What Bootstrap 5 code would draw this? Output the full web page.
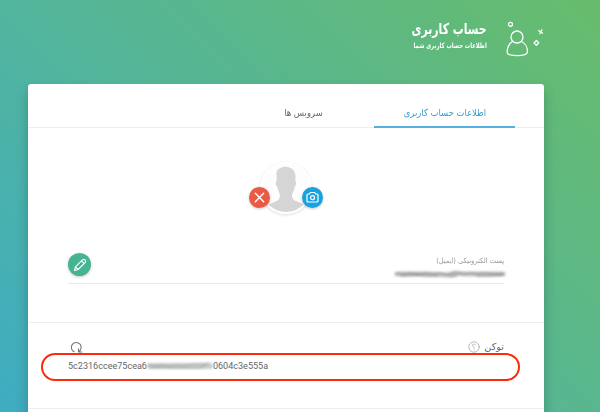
<!DOCTYPE html>
<html lang="fa" dir="rtl">
<head>
<meta charset="utf-8">
<meta name="viewport" content="width=device-width, initial-scale=1">
<title>حساب کاربری</title>
<link rel="stylesheet" href="https://cdn.jsdelivr.net/npm/bootstrap@5.3.0/dist/css/bootstrap.min.css">
<style>
body{height:412px;overflow:hidden;font-family:"DejaVu Sans",sans-serif;line-height:1;background:linear-gradient(45deg,#3eacc2 0%,#52b59e 40%,#5ab78c 62%,#67bc6b 100%)}
svg{display:block;fill:none;stroke:currentColor;stroke-linecap:round;stroke-linejoin:round}
.page-head{height:84px;padding:21px 57px 0 0}
.head-text{margin-right:18px}
.head-title{font-size:15px;line-height:18px;margin:-1px 0 0;transform:scaleX(.725);transform-origin:right}
.head-sub{font-size:7.4px;line-height:10px;margin:3px 0 0;font-weight:700;transform:scaleX(.72);transform-origin:right}
.panel{width:516px;height:328px;margin-right:56px;border:0;border-radius:3px 3px 0 0;box-shadow:0 7px 12px rgba(0,50,50,.28)}
.panel-tabs{height:44px;padding:17px 29px 0 0;border-bottom:1px solid #eee}
.panel-tabs .nav-link{width:141px;height:27px;padding:6px 0 0;border:0;border-bottom:2px solid transparent;border-radius:0;color:#666;font-size:9.8px;line-height:12px;text-align:center;white-space:nowrap;background:none;transition:none}
.panel-tabs .nav-link span{display:inline-block;transform:scaleX(.86)}
.panel-tabs .nav-link.active{color:#349fd5;border-color:#55b0df}
.profile{height:195px;padding:34px 40px 0;border-bottom:1px solid #eee}
.portrait{width:74px;height:53px;margin:0 auto}
.portrait-img{width:52px;height:52px;border:2px solid #fff;box-shadow:0 1px 3px rgba(0,0,0,.14);background:#fdfdfd;overflow:hidden}
.round-btn{width:21px;height:21px;color:#fff;box-shadow:0 1px 3px rgba(0,0,0,.22);border:0;padding:0}
.remove{background:#e95b45;left:0;top:25px}
.camera{background:#18a2df;right:0;top:25px}
.edit{width:23px;height:23px;background:#46b493;margin-bottom:7px}
.field{height:35px;margin-top:34px;border-bottom:1px solid #e8e8e8}
.field-label{font-size:7.4px;line-height:10px;color:#999;transform:scaleX(.9);transform-origin:right;margin-top:3px}
.smudge{filter:blur(.8px)}
.mail-smudge{margin:3px -2px 0 0}
.token{height:86px;padding:17px 40px 0;border-bottom:1px solid #eee}
.token-name{font-size:9.7px;line-height:14px;color:#666}
.muted-stroke{stroke:#aaa}
.reload{stroke:#777}
.token-value{font:9.05px/12px Roboto,sans-serif;color:#666;margin-top:6px}
.highlight{width:479px;height:28px;left:13px;top:269px;border:2px solid #fb2b0b;border-radius:15px}
</style>
<script src="https://cdn.jsdelivr.net/npm/bootstrap@5.3.0/dist/js/bootstrap.bundle.min.js"></script>
</head>
<body>
<header class="page-head d-flex align-items-start text-white">
  <svg width="38" height="36" viewBox="505 21 38 36" stroke-width="1.3"><circle cx="517" cy="37" r="6"/><path d="M512.5 41.5C508.8 43.5 507 48.5 507.2 52.2C507.4 54.9 511 55.6 517.1 55.6S527 54.9 527.4 52.2C527.7 48 525.5 43.4 521.5 41.5"/><circle cx="510.5" cy="24.3" r="2"/><path d="M536.4 40.5L538.8 42.9L536.4 45.3L534 42.9ZM538.7 30.6L542.6 33.2M542 29.8L539.8 33.8"/></svg>
  <div class="head-text"><h1 class="head-title fw-bold">حساب کاربری</h1><p class="head-sub">اطلاعات حساب کاربری شما</p></div>
</header>
<main class="panel card position-relative">
  <nav class="panel-tabs nav flex-nowrap"><a class="nav-link active" href="#"><span>اطلاعات حساب کاربری</span></a><a class="nav-link" href="#"><span>سرویس ها</span></a></nav>
  <section class="profile">
    <div class="portrait position-relative">
      <div class="portrait-img rounded-circle mx-auto"><svg width="48" height="48" viewBox="0 0 48 48"><path fill="#d5d5d5" stroke="none" d="M14.5 11C14 6 17 4.5 19 4C22 1.5 33 2.5 33.5 12L33.3 17C34.8 18 34 22 32.6 23C32 27 30.5 29 30 31C30 36 33 37 39 39L46 43V48H2V43L10 39C15 37 18 36 18 31C17 28 16 26 15.3 23C13.7 21.5 13.2 18 14.7 17Z"/></svg></div>
      <button class="round-btn camera position-absolute rounded-circle d-flex align-items-center justify-content-center" aria-label="دوربین"><svg width="13" height="13" viewBox="0 0 13 13" stroke-width="1.2"><path d="M1 4Q1 3 2 3H3.4L4.4 1.5H8.6L9.6 3H11Q12 3 12 4V10Q12 11 11 11H2Q1 11 1 10Z"/><circle cx="6.5" cy="6.7" r="2"/></svg></button>
      <button class="round-btn remove position-absolute rounded-circle d-flex align-items-center justify-content-center" aria-label="حذف"><svg width="11" height="11" viewBox="0 0 11 11" stroke-width="1.4"><path d="M1.3 1.3L9.7 9.7M9.7 1.3L1.3 9.7"/></svg></button>
    </div>
    <div class="field d-flex align-items-end justify-content-between">
      <div class="align-self-start pt-1"><div class="field-label">پست الکترونیکی (ایمیل)</div>
      <svg class="smudge mail-smudge" width="112" height="10" viewBox="0 0 112 10"><path stroke="#c4c4c4" stroke-width="5" d="M3 5H35L53 6L62 4L70 5H109"/><path stroke="#8a8a8a" stroke-width="1.2" d="M2 4.5L9 5L16 4L24 5L31 4L38 5L46 4L54 6L60 4L69 5L77 4L83 5L91 4L100 5L110 5M7 7L22 6L33 7L44 7M56 8L63 7M83 7L95 7L108 6"/></svg></div>
      <button class="round-btn edit rounded-circle d-flex align-items-center justify-content-center" aria-label="ویرایش"><svg width="14" height="14" viewBox="0 0 14 14" stroke-width="1.1"><path d="M1.5 12.5L2.4 8.8L9.7 1.6Q10.8.8 12 2T12.3 4.3L5.1 11.5ZM8.5 2.8L11.1 5.4M2.4 8.8L5.1 11.5"/></svg></button>
    </div>
  </section>
  <section class="token">
    <div class="d-flex align-items-center">
      <span class="token-name">توکن</span>
      <svg class="me-1 muted-stroke" width="12" height="12" viewBox="0 0 12 12" stroke-width=".8"><circle cx="6" cy="6" r="5.2"/><path d="M7.5 4.1Q6.8 3 5.7 3T4.5 4.4Q4.7 5.4 6 6V7.2M6 8.8V8.9"/></svg>
      <svg class="me-auto reload" width="15" height="13" viewBox="0 0 15 13" stroke-width="1.1"><path d="M6.2 10.8A4.9 4.9 0 1 1 10.5 10.7M10.5 7.9V11H13.8"/></svg>
    </div>
    <div class="token-value d-flex align-items-center" dir="ltr"><span>5c2316ccee75cea6</span><svg class="smudge" width="66" height="11" viewBox="0 0 66 11"><path stroke="#ccc" stroke-width="6" d="M3 5H63"/><path stroke="#a5a5a5" stroke-width="1.1" d="M1 4L8 5L16 4L23 5L30 4L38 5L47 3L54 3L62 2M3 7L13 6L27 7L42 7L52 7L59 4"/></svg><span>0604c3e555a</span></div>
  </section>
  <div class="highlight position-absolute"></div>
</main>
</body>
</html>
